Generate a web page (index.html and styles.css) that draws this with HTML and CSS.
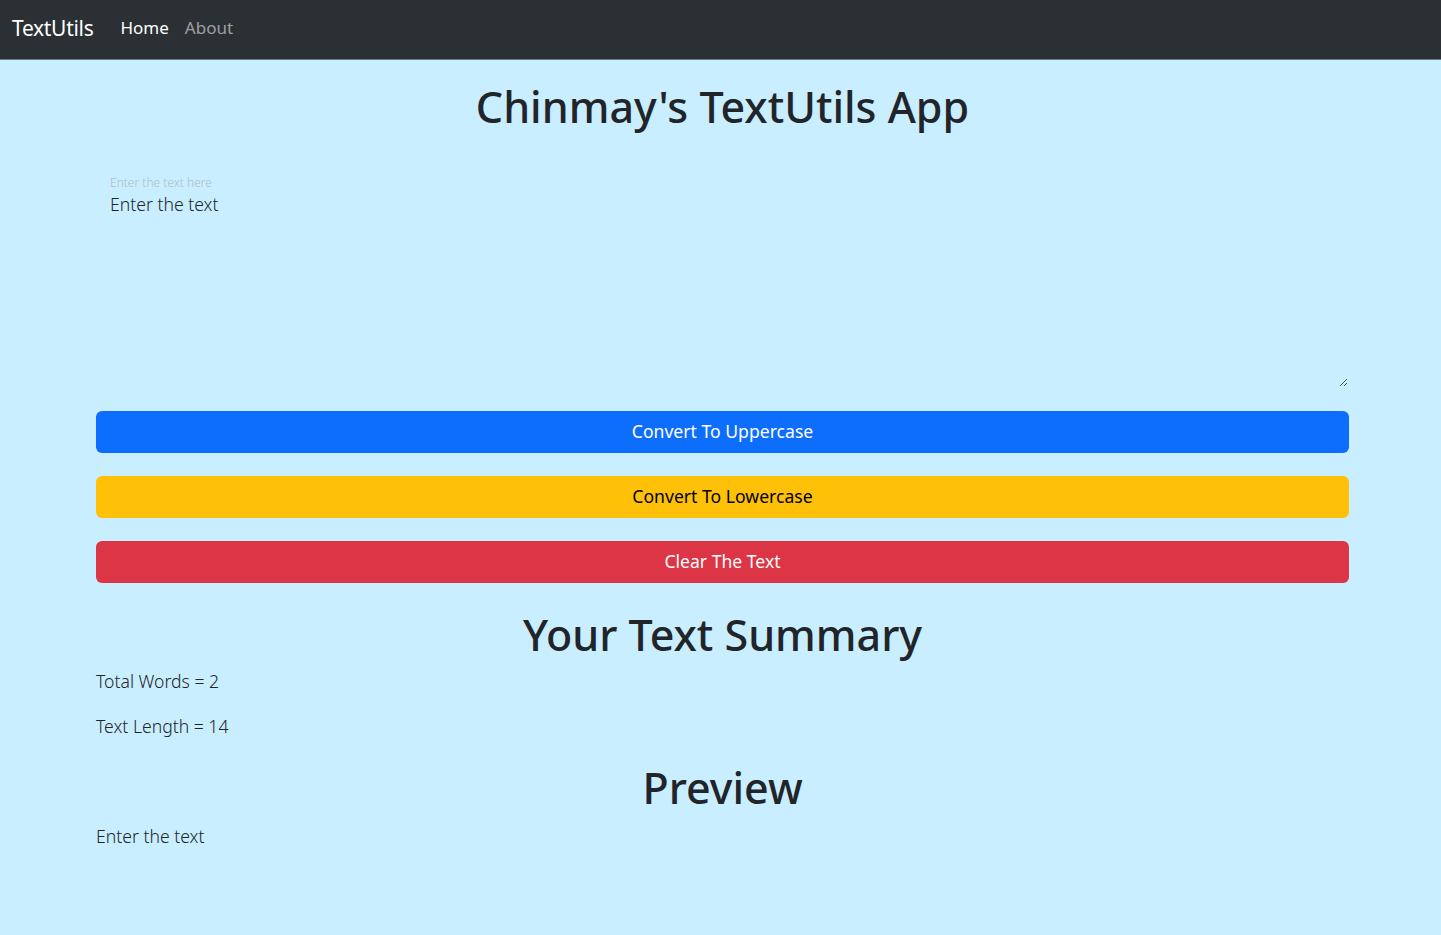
FILE: index.html
```html
<!DOCTYPE html>
<html lang="en">
<head>
<meta charset="utf-8">
<title>TextUtils</title>
<link rel="stylesheet" href="styles.css">
</head>
<body>
<nav class="navbar">
  <a class="brand" href="#">TextUtils</a>
  <ul class="nav-links">
    <li><a class="nav-link active" href="#">Home</a></li>
    <li><a class="nav-link" href="#">About</a></li>
  </ul>
</nav>
<main class="container">
  <h1 class="title">Chinmay's TextUtils App</h1>
  <div class="floating">
    <textarea class="text-input" id="box">Enter the text</textarea>
    <label class="float-label" for="box">Enter the text here</label>
  </div>
  <div class="actions">
    <button class="btn btn-blue">Convert To Uppercase</button>
    <button class="btn btn-yellow">Convert To Lowercase</button>
    <button class="btn btn-red">Clear The Text</button>
  </div>
  <h1 class="section-title">Your Text Summary</h1>
  <p class="stat">Total Words = 2</p>
  <p class="stat">Text Length = 14</p>
  <h1 class="section-title preview-title">Preview</h1>
  <p class="stat">Enter the text</p>
</main>
</body>
</html>
```
FILE: styles.css
```css
* { box-sizing: border-box; }
html, body { margin: 0; padding: 0; }
body {
  background: #c9eeff;
  color: #212529;
  font-family: "Noto Sans", "Open Sans", sans-serif;
  font-size: 17.6px;
  line-height: 1.5;
  min-height: 935px;
}
.navbar {
  height: 60px;
  background: #2b3035;
  border-bottom: 1px solid #6e7a84;
  display: flex;
  align-items: center;
  padding-left: 12px;
  padding-bottom: 2px;
}
.brand {
  color: #fff;
  text-decoration: none;
  font-size: 21px;
  margin-right: 19px;
  letter-spacing: -0.3px;
}
.nav-links {
  list-style: none;
  display: flex;
  margin: 0;
  padding: 0;
}
.nav-link {
  display: block;
  padding: 6px 8px 8px;
  color: rgba(255,255,255,0.55);
  text-decoration: none;
  font-size: 17px;
}
.nav-link.active { color: #fff; }
.container {
  width: 1253px;
  margin-left: 96px;
  padding-top: 21px;
}
h1 {
  margin: 0;
  font-weight: 500;
  font-size: 43px;
  line-height: 1.2;
  text-align: center;
}
.title { margin-bottom: 33px; }
.floating { position: relative; margin-bottom: 23px; }
.text-input {
  display: block;
  width: 100%;
  height: 222px;
  background: transparent;
  border: 1px solid transparent;
  padding: 24px 13px 8px;
  font-family: inherit;
  font-size: 17.6px;
  font-weight: 300;
  line-height: 1.5;
  color: #212529;
  resize: vertical;
  outline: none;
}
.float-label {
  position: absolute;
  left: 14px;
  top: 8px;
  font-size: 12px;
  font-weight: 300;
  color: #aebcc4;
  pointer-events: none;
}
.actions {
  display: flex;
  flex-direction: column;
  gap: 23px;
  margin-bottom: 26px;
}
.btn {
  height: 42px;
  border: 1px solid transparent;
  border-radius: 6px;
  font-family: inherit;
  font-size: 17.6px;
  line-height: 1.5;
  cursor: pointer;
}
.btn-blue { background: #0d6efd; color: #fff; }
.btn-yellow { background: #ffc107; color: #000; }
.btn-red { background: #dc3545; color: #fff; }
.section-title { margin-bottom: 8px; }
.stat {
  margin: 0 0 18px;
  font-weight: 300;
}
.preview-title { margin-top: 23px; margin-bottom: 9px; }
```
